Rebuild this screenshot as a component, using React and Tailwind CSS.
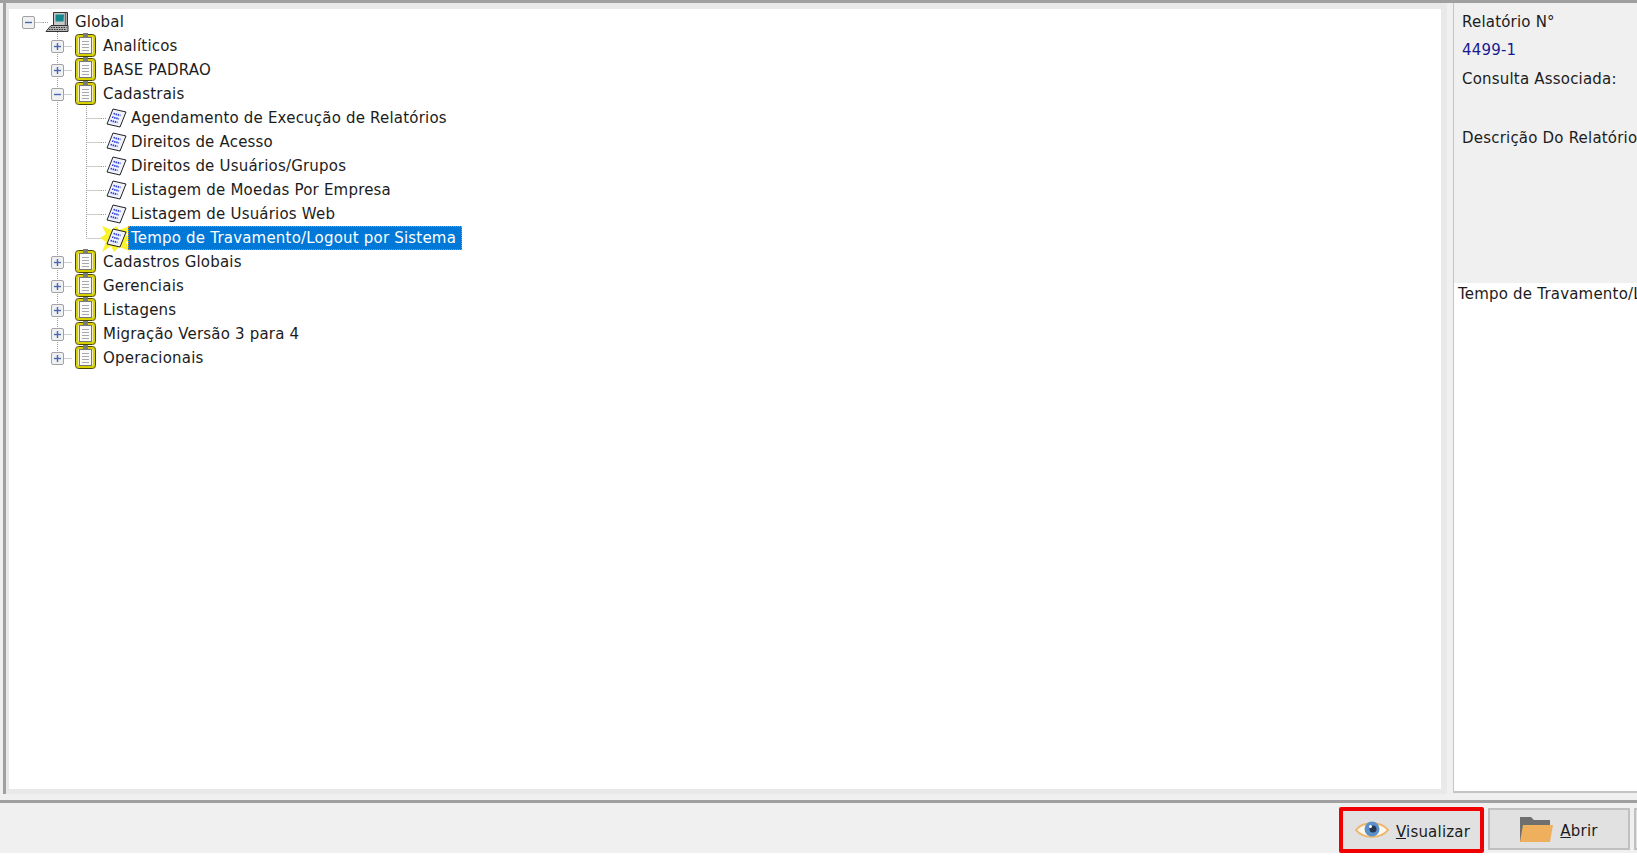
const font = "font-['DejaVu_Sans',sans-serif]"

function Lines({ up, down, right, left, children }) {
    return (
        <svg width="29" height="24" className="shrink-0 overflow-visible" viewBox="0 0 29 24">
            <g stroke="#9a9a9a" strokeDasharray="1 1" fill="none">
                {up && <path d="M14.5 0V12" />}
                {down && <path d="M14.5 12V24" />}
                {right && <path d="M14.5 12.5H29" />}
                {left && <path d="M0 12.5H6" />}
            </g>
            {children}
        </svg>
    )
}

function Expander({ open }) {
    return (
        <g>
            <rect x="8.5" y="6.5" width="12" height="12" rx="1.5" fill="#eef0f2" stroke="#a2a2a2" />
            <path d="M11 12.5H18" stroke="#4a67ad" strokeWidth="1.4" />
            {!open && <path d="M14.5 9V16" stroke="#4a67ad" strokeWidth="1.4" />}
        </g>
    )
}

function ComputerIcon() {
    return (
        <g>
            <path d="M10.5 2.5H24.5V15.5H10.5Z" fill="#c9c9c9" stroke="#333" />
            <path d="M12.5 4.5H21L20.5 11.5H12.5Z" fill="#12888e" />
            <path d="M22.5 3V15" stroke="#666" strokeWidth="1.5" />
            <path d="M8 15.5H25L25 21.5H3Z" fill="#b5b5b5" stroke="#333" />
            <path d="M8 17.5H23.5M6 19.5H23.5" stroke="#333" strokeDasharray="1.5 1" />
        </g>
    )
}

function ClipboardIcon() {
    return (
        <g>
            <rect x="5" y="2" width="17" height="19" rx="2" fill="#f6f6f6" stroke="#d9d000" strokeWidth="2.4" />
            <rect x="3.5" y="0.5" width="20" height="22" rx="3" fill="none" stroke="#4a4600" />
            <rect x="7.5" y="3.5" width="12" height="16" fill="#fbfbfb" stroke="#777" />
            <rect x="11" y="-1" width="5" height="5" fill="#7b7b7b" />
            <path d="M10 7.5H17M10 10.5H17M10 13.5H17M10 16.5H17" stroke="#a8a8a8" />
        </g>
    )
}

function DocIcon({ active }) {
    return (
        <g>
            {active && (
                <path
                    d="M1 0L11 4L15 0L18 4L29 0L25 9L31 13L25 16L29 25L18 21L13 26L10 20L1 26L5 16L-1 12L5 8Z"
                    fill="#fbf32a"
                />
            )}
            <path d="M12 3L25 6L19 21L6 18Z" fill="#f0f3fb" stroke="#222" />
            <path d="M12.5 7.5L19.5 9.5M11 11L18 13M9.5 14.5L16.5 16.5" stroke="#2f45d8" strokeWidth="1.8" strokeDasharray="1.5 0.7" />
        </g>
    )
}

function EyeIcon() {
    return (
        <svg width="34" height="22" viewBox="0 0 34 22" className="shrink-0 ml-[2px]">
            <path d="M1 11C8 2 26 2 33 11C26 20 8 20 1 11Z" fill="#fdf8ef" stroke="#eeb468" strokeWidth="2" />
            <circle cx="17" cy="10" r="7.5" fill="#5c90c8" />
            <circle cx="18" cy="10" r="3.5" fill="#26364f" />
            <circle cx="15.5" cy="7.5" r="1.5" fill="#fff" />
        </svg>
    )
}

function FolderIcon() {
    return (
        <svg width="34" height="28" viewBox="0 0 34 28" className="shrink-0">
            <path d="M0 2H11L14 5H30V12H3V27H0Z" fill="#6f6f6f" />
            <path d="M0 27L3 10H33L30 27Z" fill="#eeb05c" />
        </svg>
    )
}

const Label = ({ children, className = "" }) => (
    <span className={`whitespace-nowrap text-[15px] leading-6 tracking-[0.2px] ${className}`}>{children}</span>
)

function Branch({ label, open, last }) {
    return (
        <div className="flex items-center h-6 pl-[5px]">
            <Lines />
            <Lines up down={!last} right>
                <Expander open={open} />
            </Lines>
            <Lines>
                <ClipboardIcon />
            </Lines>
            <Label className="ml-[2px]">{label}</Label>
        </div>
    )
}

function Leaf({ label, last, selected }) {
    return (
        <div className="flex items-center h-6 pl-[5px]">
            <Lines />
            <Lines up down />
            <Lines up down={!last} right />
            <Lines left>
                <DocIcon active={selected} />
            </Lines>
            {selected ? (
                <span className="relative ml-[-2px] h-[24px] flex items-center pl-[2px] pr-[5px] bg-[#0078d7] text-white border border-dotted border-[#e08a2a]">
                    <Label>{label}</Label>
                </span>
            ) : (
                <Label className="ml-[1px]">{label}</Label>
            )}
        </div>
    )
}

const before = ["Analíticos", "BASE PADRAO"]
const after = ["Cadastros Globais", "Gerenciais", "Listagens", "Migração Versão 3 para 4", "Operacionais"]
const leaves = [
    "Agendamento de Execução de Relatórios",
    "Direitos de Acesso",
    "Direitos de Usuários/Grupos",
    "Listagem de Moedas Por Empresa",
    "Listagem de Usuários Web",
]

export default function App() {
    return (
        <div className={`w-[1637px] h-[856px] flex flex-col overflow-hidden bg-[#f0f0f0] text-[#1c1c1c] ${font}`}>
            <div className="h-[800px] flex border-t-[3px] border-[#a0a0a0]">
                <div className="w-[1444px] h-[791px] ml-[3px] border-l-[3px] border-[#a0a0a0] bg-[#e9e9e9] pl-[3px] pt-[6px] pr-[6px] pb-[5px]">
                    <div className="h-full bg-white pt-[1px]">
                        <div className="flex items-center h-6 pl-[5px]">
                            <Lines right>
                                <Expander open />
                            </Lines>
                            <Lines down left>
                                <ComputerIcon />
                            </Lines>
                            <Label className="ml-[3px]">Global</Label>
                        </div>
                        {before.map((l) => (
                            <Branch key={l} label={l} />
                        ))}
                        <Branch label="Cadastrais" open />
                        {leaves.map((l) => (
                            <Leaf key={l} label={l} />
                        ))}
                        <Leaf label="Tempo de Travamento/Logout por Sistema" last selected />
                        {after.map((l, i) => (
                            <Branch key={l} label={l} last={i === after.length - 1} />
                        ))}
                    </div>
                </div>
                <div className="flex-1 min-w-0 h-[790px] ml-[6px] border-l border-b-2 border-[#c4c4c4] bg-white overflow-hidden">
                    <div className="h-[280px] bg-[#f0f0f0] pl-[8px] flex flex-col">
                        <Label className="mt-[7px]">Relatório N°</Label>
                        <Label className="mt-[4px] text-[#1a1a90] tracking-[-1.5px]">4499-1</Label>
                        <Label className="mt-[5px]">Consulta Associada:</Label>
                        <Label className="mt-[35px]">Descrição Do Relatório</Label>
                    </div>
                    <div className="pl-[4px] -mt-[1px]">
                        <Label>Tempo de Travamento/Logout por Sistema</Label>
                    </div>
                </div>
            </div>
            <div className="h-[3px] bg-[#a0a0a0]" />
            <div className="flex-1 flex items-start justify-end gap-[4px] pt-[4px] border-b-[3px] border-white">
                <button className="w-[145px] h-[46px] flex items-center justify-center gap-[7px] bg-[#e1e1e1] border-4 border-[#f00000] rounded-[2px]">
                    <EyeIcon />
                    <Label className="mt-[3px]">
                        <span className="underline">V</span>isualizar
                    </Label>
                </button>
                <button className="w-[142px] h-[42px] mt-[1px] flex items-center justify-center gap-[6px] bg-[#e1e1e1] border-2 border-[#c0c0c0]">
                    <FolderIcon />
                    <Label className="mt-[3px]">
                        <span className="underline">A</span>brir
                    </Label>
                </button>
                <div className="w-[3px] h-[42px] mt-[1px] bg-[#e1e1e1] border-l-2 border-y-2 border-[#c0c0c0]" />
            </div>
        </div>
    )
}
